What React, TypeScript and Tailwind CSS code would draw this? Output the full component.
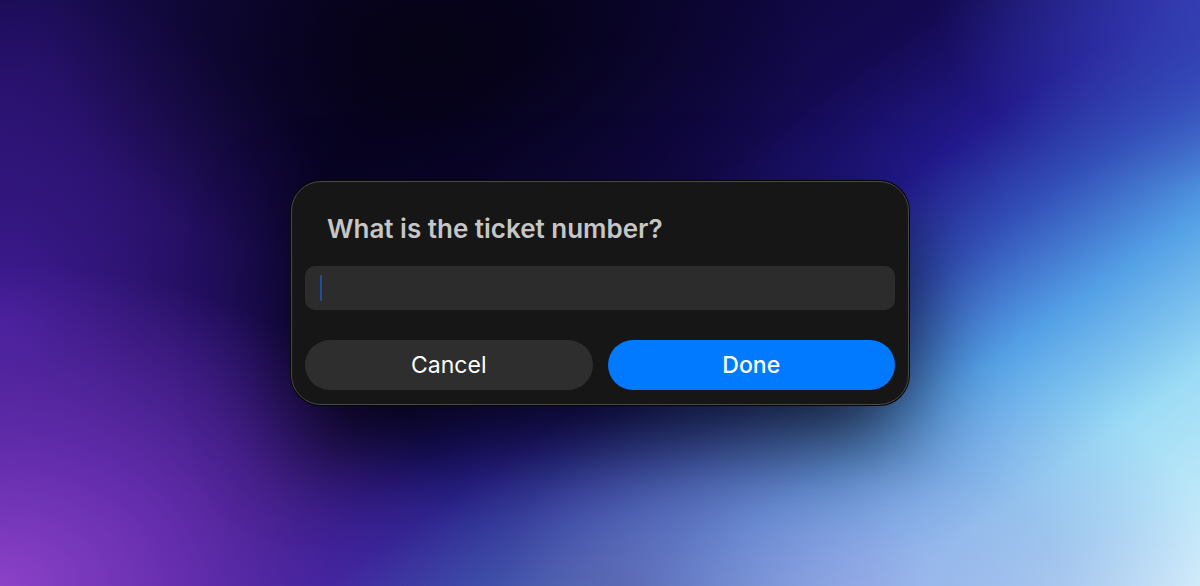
export default function App() {
  return (
    <div className="relative w-full h-[586px] overflow-hidden flex items-center justify-center font-['Inter','Noto_Sans',sans-serif] bg-[#0a0420]">
      {/* Backdrop */}
      <div className="absolute inset-0 bg-[radial-gradient(ellipse_32%_40%_at_36%_8%,rgba(4,2,18,0.95)_0%,rgba(4,2,18,0)_100%),radial-gradient(ellipse_30%_40%_at_72%_100%,rgba(150,160,230,0.7)_0%,rgba(130,140,220,0.35)_55%,rgba(120,130,210,0)_100%),radial-gradient(ellipse_25%_30%_at_52%_100%,rgba(80,75,145,0.7)_0%,rgba(70,60,140,0)_100%),radial-gradient(ellipse_40%_55%_at_0%_100%,rgba(140,66,200,1)_0%,rgba(110,50,185,0.85)_40%,rgba(80,35,160,0)_100%),radial-gradient(ellipse_30%_60%_at_0%_55%,rgba(70,30,160,0.9)_0%,rgba(60,25,150,0)_100%),radial-gradient(ellipse_30%_45%_at_0%_15%,rgba(30,14,95,0.9)_0%,rgba(30,14,95,0)_100%),radial-gradient(ellipse_22%_32%_at_100%_0%,rgba(55,68,185,0.8)_0%,rgba(50,60,175,0)_100%),linear-gradient(145deg,#120840_0%,#0a0430_28%,#140a52_47%,#22198c_57%,#3350b8_65%,#54a0e6_74%,#9cdcf5_85%,#d6f0fc_100%)]" />

      {/* Dialog */}
      <div className="relative w-[618px] rounded-[30px] border border-[#4a4a4a] bg-[#161616] px-[13px] pt-[30px] pb-[14px] shadow-[0_0_0_1px_#050505,0_40px_90px_rgba(0,0,0,0.75)]">
        <h1 className="pl-[22px] pt-px text-[26px] leading-8 font-semibold text-[#c6c6c6]">
          What is the ticket number?
        </h1>

        <div className="mt-[21px] h-[44px] rounded-[10px] bg-[#2c2c2c] flex items-center pl-[15px]">
          <span className="block w-[2px] h-[26px] rounded-full bg-[#1f4f9a]" />
        </div>

        <div className="mt-[30px] flex gap-[15px]">
          <button className="flex-1 h-[50px] rounded-full bg-[#2e2e2e] text-white text-[23px] font-normal">
            Cancel
          </button>
          <button className="flex-1 h-[50px] rounded-full bg-[#017aff] text-white text-[23px] font-medium">
            Done
          </button>
        </div>
      </div>
    </div>
  );
}
